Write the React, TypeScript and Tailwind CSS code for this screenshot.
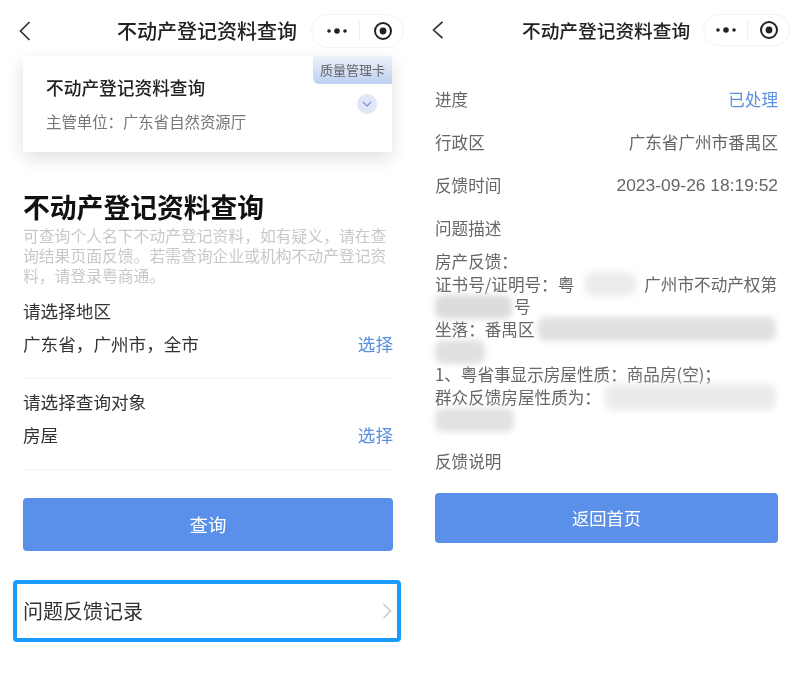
const FONT = 'font-["Noto_Sans_CJK_SC","Noto_Sans",sans-serif]';

function BackIcon({ h }: { h: number }) {
  return (
    <svg width="12" height={h} viewBox="0 0 12 20" fill="none" stroke="#333" strokeWidth="1.7" preserveAspectRatio="none">
      <path d="M10.5 1 L1.5 10 L10.5 19" />
    </svg>
  );
}

function Capsule({ wide }: { wide: boolean }) {
  return (
    <div
      className={`flex items-center rounded-full border border-[#f3f3f3] ${
        wide ? 'w-[93px] h-[34px]' : 'w-[87px] h-[32px]'
      }`}
    >
      <svg className={wide ? 'ml-[14px]' : 'ml-[11px]'} width="22" height="8" viewBox="0 0 22 8" fill="#222">
        <circle cx="3" cy="4" r="1.8" />
        <circle cx="11" cy="4" r="2.8" />
        <circle cx="19" cy="4" r="1.8" />
      </svg>
      <div className={`w-px h-[20px] bg-[#eeeeee] ${wide ? 'ml-[11px]' : 'ml-[10px]'}`} />
      <svg className={wide ? 'ml-[13px]' : 'ml-[11px]'} width="20" height="20" viewBox="0 0 20 20" fill="none">
        <circle cx="10" cy="10" r="8" stroke="#222" strokeWidth="2" />
        <circle cx="10" cy="10" r="3.4" fill="#222" />
      </svg>
    </div>
  );
}

function Blob({ w, h = 24, className = 'bg-[#e2e2e2]' }: { w: number; h?: number; className?: string }) {
  return <span className={`block shrink-0 rounded-[8px] blur-[3px] ${className}`} style={{ width: w, height: h }} />;
}

function Line({ children }: { children: React.ReactNode }) {
  return <div className="flex items-center h-[22.7px] whitespace-nowrap">{children}</div>;
}

function InfoRow({ label, value, blue }: { label: string; value: string; blue?: boolean }) {
  return (
    <div className="flex justify-between items-center h-[24px]">
      <span className="text-[#666666]">{label}</span>
      <span className={blue ? 'text-[#5a90e0]' : 'text-[#666666]'}>{value}</span>
    </div>
  );
}

function Field({ label, value }: { label: string; value: string }) {
  return (
    <div>
      <div className="text-[17.6px] leading-[24px] text-[#333333]">{label}</div>
      <div className="mt-[9px] flex justify-between text-[17.6px] leading-[24px] text-[#333333]">
        <span>{value}</span>
        <span className="text-[#5a90e0]">选择</span>
      </div>
      <div className="mt-[22px] h-px bg-[#f2f2f2]" />
    </div>
  );
}

export default function App() {
  return (
    <div className={`flex w-[800px] h-[696px] bg-white overflow-hidden blur-[0.4px] ${FONT}`}>
      {/* left phone */}
      <div className="w-[410px] shrink-0 pt-[14px]">
        <div className="flex items-center h-[34px]">
          <div className="ml-[19px] flex">
            <BackIcon h={20} />
          </div>
          <div className="ml-[86px] w-[181px] whitespace-nowrap text-[20px] leading-[34px] font-medium text-[#222222]">
            不动产登记资料查询
          </div>
          <div className="ml-[13px]">
            <Capsule wide />
          </div>
        </div>

        <div className="relative ml-[23px] w-[369px] mt-[8px] h-[96px] flex items-center justify-between pl-[23px] pr-[15px] rounded-[3px] bg-white shadow-[0_6px_18px_rgba(0,0,0,0.13)]">
          <div>
            <div className="text-[17.7px] leading-[24px] font-medium text-[#222222] whitespace-nowrap">不动产登记资料查询</div>
            <div className="mt-[10px] text-[15.4px] leading-[24px] text-[#777777] whitespace-nowrap">主管单位：广东省自然资源厅</div>
          </div>
          <div className="flex items-center justify-center w-[20px] h-[20px] rounded-full bg-[#e1e7f6]">
            <svg width="10" height="6" viewBox="0 0 10 6" fill="none" stroke="#6d97e0" strokeWidth="1.2">
              <path d="M1 1 L5 5 L9 1" />
            </svg>
          </div>
          <div className="absolute top-0 right-0 w-[79px] h-[28px] flex items-center justify-center rounded-bl-[6px] bg-gradient-to-b from-[#eef2fa] to-[#bccff0] text-[13px] text-[#666666] whitespace-nowrap">
            质量管理卡
          </div>
        </div>

        <div className="ml-[23px] w-[370px]">
          <h1 className="mt-[37px] text-[26.8px] leading-[36px] font-bold text-[#111111] whitespace-nowrap">不动产登记资料查询</h1>
          <p className="mt-[1px] text-[15.8px] leading-[20px] text-[#c8c8c8]">
            可查询个人名下不动产登记资料，如有疑义，请在查询结果页面反馈。若需查询企业或机构不动产登记资料，请登录粤商通。
          </p>
          <div className="mt-[13px]">
            <Field label="请选择地区" value="广东省，广州市，全市" />
          </div>
          <div className="mt-[11px]">
            <Field label="请选择查询对象" value="房屋" />
          </div>
          <button className="mt-[28px] w-[370px] h-[53px] rounded-[4px] bg-[#5a90ea] text-[18.5px] text-white">查询</button>
        </div>

        <div className="mt-[29px] ml-[13px] w-[388px] h-[62px] flex items-center justify-between pl-[6px] pr-[5px] rounded-[4px] border-[4px] border-[#1a9cff] bg-white">
          <span className="text-[20px] text-[#333333] whitespace-nowrap">问题反馈记录</span>
          <svg width="10" height="16" viewBox="0 0 10 16" fill="none" stroke="#c8c8c8" strokeWidth="1.5">
            <path d="M1.5 1 L8.5 8 L1.5 15" />
          </svg>
        </div>
      </div>

      {/* right phone */}
      <div className="w-[390px] shrink-0 pt-[14px]">
        <div className="flex items-center h-[32px]">
          <div className="ml-[22px] flex">
            <BackIcon h={18} />
          </div>
          <div className="ml-[78px] w-[168px] whitespace-nowrap text-[18.7px] leading-[32px] font-medium text-[#222222]">
            不动产登记资料查询
          </div>
          <div className="ml-[13px]">
            <Capsule wide={false} />
          </div>
        </div>

        <div className="ml-[25px] w-[343px] text-[16.6px]">
          <div className="mt-[41px] flex flex-col gap-[19px]">
            <InfoRow label="进度" value="已处理" blue />
            <InfoRow label="行政区" value="广东省广州市番禺区" />
            <div className="flex justify-between items-center h-[24px] text-[#666666]">
              <span>反馈时间</span>
              <span className="text-[17.4px] font-['Liberation_Sans',sans-serif]">2023-09-26 18:19:52</span>
            </div>
            <InfoRow label="问题描述" value="" />
          </div>

          <div className="mt-[10px] text-[#666666]">
            <Line>房产反馈：</Line>
            <Line>
              证书号/证明号：粤
              <span className="ml-[11px]"><Blob w={51} className="bg-[#ececec]" /></span>
              <span className="ml-[8px]">广州市不动产权第</span>
            </Line>
            <Line>
              <Blob w={77} className="bg-[#dcdcdc]" />
              <span className="ml-[2px]">号</span>
            </Line>
            <Line>
              坐落：番禺区
              <span className="ml-[3px]"><Blob w={238} className="bg-[#e0e0e0]" /></span>
            </Line>
            <Line>
              <Blob w={50} className="bg-[#e0e0e0]" />
            </Line>
            <Line>1、粤省事显示房屋性质：商品房(空)；</Line>
            <Line>
              群众反馈房屋性质为：
              <span className="ml-[4px]"><Blob w={171} h={26} className="bg-[#ebebeb]" /></span>
            </Line>
            <Line>
              <Blob w={79} className="bg-[#e2e2e2]" />
            </Line>
          </div>

          <div className="mt-[17px] h-[24px] leading-[24px] text-[#666666]">反馈说明</div>
          <button className="mt-[20px] w-[343px] h-[50px] rounded-[4px] bg-[#5a90ea] text-[17.3px] text-white">返回首页</button>
        </div>
      </div>
    </div>
  );
}
